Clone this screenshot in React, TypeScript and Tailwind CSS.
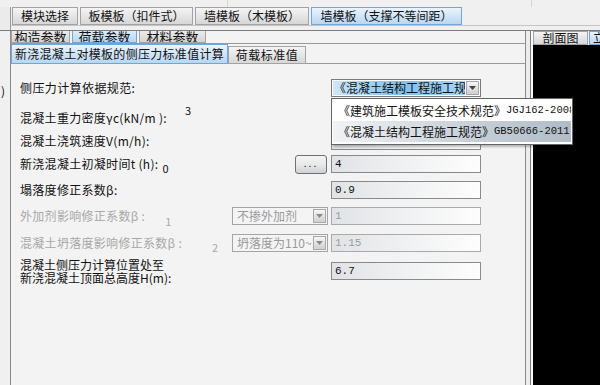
import React from 'react';

const cjk = "font-['Noto_Sans_CJK_SC',sans-serif]";
const mono = "font-['Liberation_Mono','Noto_Sans_CJK_SC',monospace]";

function Tab({ label, active = false, className = '' }: { label: string; active?: boolean; className?: string }) {
  return (
    <div
      className={`flex shrink-0 items-center justify-center overflow-hidden whitespace-nowrap border text-[12px] leading-none text-[#111] ${
        active
          ? 'border-[#6fa6dc] bg-linear-to-b from-[#eaf4fd] to-[#b8d7f1]'
          : 'border-[#a3a3a3] bg-linear-to-b from-[#f5f5f5] to-[#d7d7d7]'
      } ${className}`}
    >
      {label}
    </div>
  );
}

function SubTab({ label, active = false, width }: { label: string; active?: boolean; width: string }) {
  return (
    <div
      className={`flex h-[12px] shrink-0 items-end justify-center overflow-hidden border-x border-b text-[13px] leading-[13px] text-[#111] ${width} ${
        active ? 'border-[#6fa6dc] bg-linear-to-b from-[#dcecfa] to-[#b8d7f1]' : 'border-[#a3a3a3] bg-linear-to-b from-[#ececec] to-[#d4d4d4]'
      }`}
    >
      <span className="-mb-[1px]">{label}</span>
    </div>
  );
}

function Arrow({ disabled = false }: { disabled?: boolean }) {
  return (
    <div className="flex h-full w-[13px] items-center justify-center border border-[#a8a8a8] bg-linear-to-b from-[#f6f6f6] to-[#cfcfcf]">
      <svg width="7" height="4" viewBox="0 0 7 4">
        <path d="M0 0h7L3.5 4z" fill={disabled ? '#8a8a8a' : '#444'} />
      </svg>
    </div>
  );
}

function Field({ value = '', disabled = false }: { value?: string; disabled?: boolean }) {
  return (
    <div
      className={`flex h-[18px] w-[150px] items-center border bg-linear-to-r from-[#e0e3e7] via-[#f0f1f2] to-[#fdfdfd] pl-[3px] text-[11px] leading-none ${mono} ${
        disabled ? 'border-[#aaaaaa] text-[#9c9c9c]' : 'border-[#8a8a8a] text-[#111]'
      }`}
    >
      {value}
    </div>
  );
}

function DisabledCombo({ label }: { label: string }) {
  return (
    <div className="flex h-[18px] w-[96px] items-center border border-[#a5a5a5] bg-[#f4f4f4] p-px">
      <div className="flex-1 overflow-hidden whitespace-nowrap pl-[3px] text-[12px] leading-none text-[#9a9a9a]">{label}</div>
      <div className="h-[14px]">
        <Arrow disabled />
      </div>
    </div>
  );
}

export default function App() {
  return (
    <div className={`relative flex h-[385px] w-[600px] flex-col overflow-hidden bg-[#f0f0f0] ${cjk}`}>
      {/* top strip */}
      <div className="flex h-[7px] shrink-0">
        <div className="w-[228px] border-r border-[#d4d4d4]" />
        <div className="w-[304px] border-r border-[#d4d4d4]" />
      </div>

      {/* module tabs */}
      <div className="flex h-[23px] shrink-0">
        <div className="w-[11px] border-r border-[#9a9a9a] bg-[#ebebeb]" />
        <div className="flex flex-1 flex-col">
          <div className="flex h-[18px] gap-[2px] pl-px">
            <Tab label="模块选择" className="w-[66px]" />
            <Tab label="板模板（扣件式）" className="w-[113px]" />
            <Tab label="墙模板（木模板）" className="w-[114px]" />
            <Tab label="墙模板（支撑不等间距）" active className="w-[151px]" />
          </div>
          <div className="flex-1 border-t border-[#c4c4c4]" />
        </div>
      </div>
      <div className="h-px shrink-0 bg-[#7c7c7c]" />

      {/* body */}
      <div className="flex flex-1">
        <div className="w-[10px] shrink-0 overflow-hidden">
          <div className="mt-[54px] pl-px text-[12px] leading-none text-[#111]">)</div>
        </div>

        <div className="flex w-[516px] shrink-0 flex-col border-x border-[#8c8c8c] bg-[#f3f3f3]">
          <div className="flex h-[12px] gap-[2px] overflow-hidden">
            <SubTab label="构造参数" width="w-[59px]" />
            <SubTab label="荷载参数" active width="w-[65px]" />
            <SubTab label="材料参数" width="w-[67px]" />
          </div>
          <div className="h-px bg-[#9a9a9a]" />
          <div className="flex h-[20px] items-end">
            <Tab label="新浇混凝土对模板的侧压力标准值计算" active className="h-[20px] w-[217px] tracking-[0.3px]" />
            <Tab label="荷载标准值" className="h-[18px] w-[78px] tracking-[0.5px]" />
            <div className="h-full flex-1 border-b border-[#9a9a9a]" />
          </div>

          <div className="flex flex-col pl-[9px] text-[12px] leading-none text-[#111]">
            <div className="mt-[14px] grid h-[20px] grid-cols-[212px_99px_150px] grid-rows-[20px] items-center">
              <span className="tracking-[0.4px]">侧压力计算依据规范:</span>
              <span />
              <div className="flex h-[18px] items-center border border-[#7a7a7a] bg-white p-px">
                <div className="flex h-full flex-1 items-center overflow-hidden whitespace-nowrap bg-linear-to-r from-[#cfe7fa] via-[#7cc1ef] to-[#a4d5f5] pl-px">
                  《混凝土结构工程施工规范》
                </div>
                <div className="ml-px h-[14px]">
                  <Arrow />
                </div>
              </div>
            </div>

            <div className="mt-[10px] grid h-[20px] grid-cols-[212px_99px_150px] grid-rows-[20px] items-center">
              <div className="flex h-full items-center">
                <span className="tracking-[0.3px]">混凝土重力密度γc(kN/m ):</span>
                <span className="-mt-[16px] ml-[18px] text-[11px]">3</span>
              </div>
              <span />
              <Field />
            </div>

            <div className="mt-[3px] grid h-[20px] grid-cols-[212px_99px_150px] grid-rows-[20px] items-center">
              <span className="tracking-[0.3px]">混凝土浇筑速度V(m/h):</span>
              <span />
              <Field />
            </div>

            <div className="mt-[3px] grid h-[20px] grid-cols-[212px_99px_150px] grid-rows-[20px] items-center">
              <div className="flex h-full items-center">
                <span className="tracking-[0.3px]">新浇混凝土初凝时间t (h):</span>
                <span className="-mb-[8px] ml-[4px] text-[11px]">0</span>
              </div>
              <div className="flex justify-end pr-[4px]">
                <div className="flex h-[19px] w-[32px] items-center justify-center rounded-[3px] border border-[#707070] bg-linear-to-b from-[#f4f4f4] via-[#e9e9e9] to-[#cdd2d7] pb-[3px] text-[10px] tracking-[2px]">
                  ...
                </div>
              </div>
              <Field value="4" />
            </div>

            <div className="mt-[6px] grid h-[20px] grid-cols-[212px_99px_150px] grid-rows-[20px] items-center">
              <span className="tracking-[0.3px]">塌落度修正系数β:</span>
              <span />
              <Field value="0.9" />
            </div>

            <div className="mt-[6px] grid h-[20px] grid-cols-[212px_99px_150px] grid-rows-[20px] items-center text-[#a8a8a8]">
              <div className="flex h-full items-center">
                <span className="tracking-[0.3px]">外加剂影响修正系数β :</span>
                <span className="-mb-[10px] ml-[20px] text-[11px]">1</span>
              </div>
              <DisabledCombo label="不掺外加剂" />
              <Field value="1" disabled />
            </div>

            <div className="mt-[7px] grid h-[20px] grid-cols-[212px_99px_150px] grid-rows-[20px] items-center text-[#a8a8a8]">
              <div className="flex h-full items-center">
                <span className="tracking-[0.3px]">混凝土坍落度影响修正系数β :</span>
                <span className="-mb-[8px] ml-[30px] text-[11px]">2</span>
              </div>
              <DisabledCombo label="坍落度为110~150" />
              <Field value="1.15" disabled />
            </div>

            <div className="mt-[5px] grid h-[26px] grid-cols-[212px_99px_150px] grid-rows-[26px] items-center">
              <div className="flex flex-col text-[12px] leading-[13px]">
                <span>混凝土侧压力计算位置处至</span>
                <span>新浇混凝土顶面总高度H(m):</span>
              </div>
              <span />
              <Field value="6.7" />
            </div>
          </div>
        </div>

        <div className="w-[4px] shrink-0 bg-[#ececec]" />
        <div className="w-px shrink-0 bg-[#7c7c7c]" />
        <div className="w-[2px] shrink-0 bg-[#fafafa]" />

        <div className="flex flex-1 flex-col">
          <div className="flex h-[14px] items-end gap-px overflow-hidden">
            <Tab label="剖面图" className="h-[14px] w-[55px]" />
            <Tab label="立面图" active className="h-[14px] w-[30px] justify-start pl-[3px]" />
          </div>
          <div className="flex-1 bg-black" />
        </div>
      </div>

      {/* open dropdown list */}
      <div className="absolute left-[331px] top-[98px] flex h-[47px] w-[242px] flex-col border border-[#646464] bg-white p-px shadow-[2px_2px_2px_rgba(0,0,0,0.25)]">
        <div className="flex h-[21px] items-center overflow-hidden whitespace-nowrap pl-[5px] text-[12px] leading-none text-[#111]">
          《建筑施工模板安全技术规范》<span className={`text-[10.5px] ${mono}`}>JGJ162-2008</span>
        </div>
        <div className="flex h-[21px] items-center overflow-hidden whitespace-nowrap bg-linear-to-r from-[#f0f3f6] via-[#ccd4dc] to-[#b1bcc7] pl-[5px] text-[12px] leading-none text-[#111]">
          《混凝土结构工程施工规范》<span className={`text-[10.5px] ${mono}`}>GB50666-2011</span>
        </div>
      </div>
    </div>
  );
}
